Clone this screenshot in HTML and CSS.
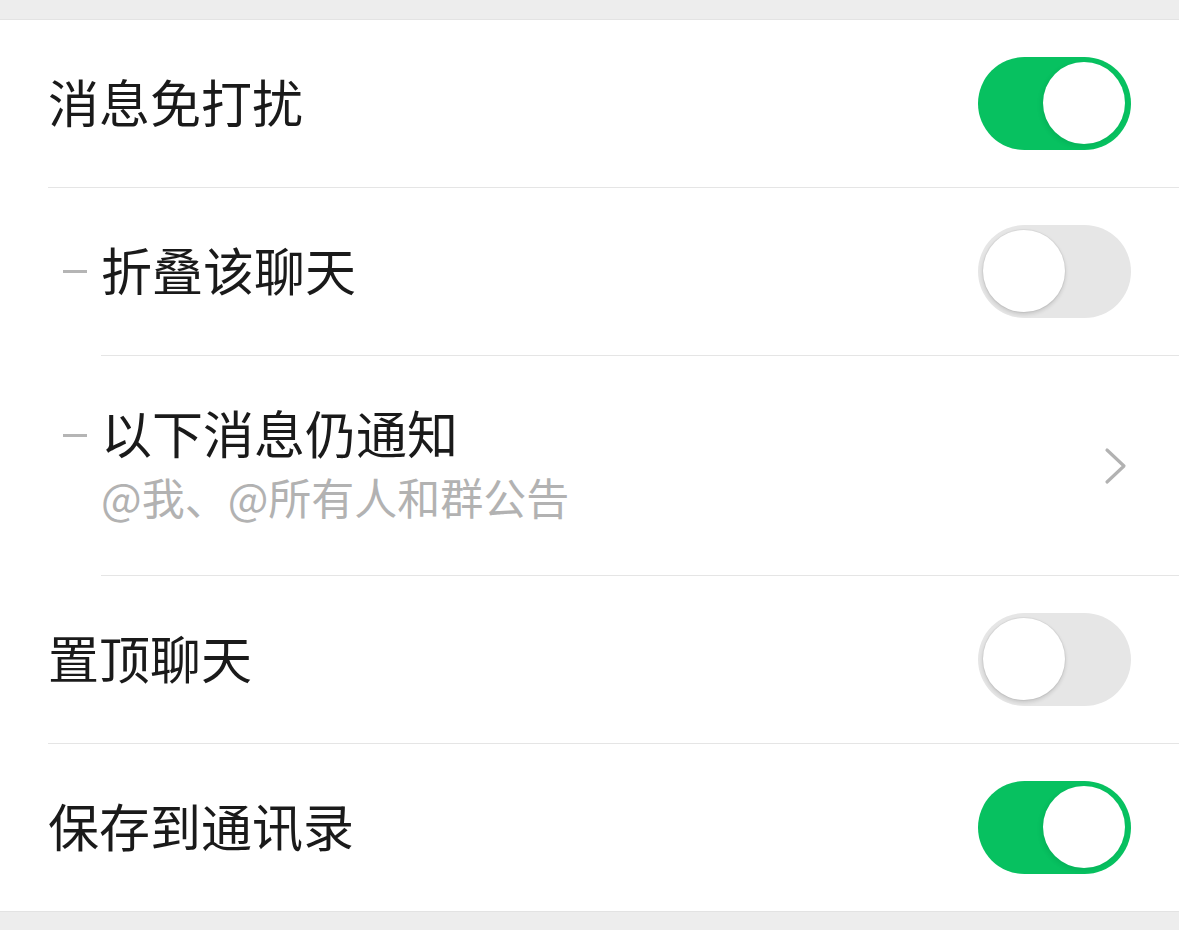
FILE: index.html
```html
<!DOCTYPE html>
<html lang="zh-CN">

<head>
    <meta charset="UTF-8">
    <meta name="viewport" content="width=device-width, initial-scale=1.0">
    <title>聊天信息</title>
    <link rel="stylesheet" href="styles.css">
</head>

<body>
    <div class="gap-top"></div>

    <div class="list">
        <div class="row">
            <div class="row-body">
                <span class="label">消息免打扰</span>
                <span class="switch on"><span class="knob"></span></span>
            </div>
        </div>

        <div class="row sub">
            <span class="dash"></span>
            <div class="row-body">
                <span class="label">折叠该聊天</span>
                <span class="switch"><span class="knob"></span></span>
            </div>
        </div>

        <div class="row sub tall">
            <span class="dash"></span>
            <div class="row-body">
                <div class="text">
                    <span class="label">以下消息仍通知</span>
                    <span class="desc">@我、@所有人和群公告</span>
                </div>
                <svg class="arrow" width="28" height="40" viewBox="0 0 28 40">
                    <polyline points="5,4 22,20 5,36" fill="none" stroke="#b2b2b2" stroke-width="3.2" stroke-linecap="round" stroke-linejoin="round" />
                </svg>
            </div>
        </div>

        <div class="row">
            <div class="row-body">
                <span class="label">置顶聊天</span>
                <span class="switch"><span class="knob"></span></span>
            </div>
        </div>

        <div class="row last">
            <div class="row-body">
                <span class="label">保存到通讯录</span>
                <span class="switch on"><span class="knob"></span></span>
            </div>
        </div>
    </div>

    <div class="gap-bottom"></div>
</body>

</html>
```

FILE: styles.css
```css
html,
body {
    margin: 0;
    padding: 0;
    background: #ededed;
    font-family: "Noto Sans CJK SC", "Noto Sans", sans-serif;
}

.gap-top {
    height: 19px;
}

.list {
    background: #fff;
    border-top: 1px solid #e3e3e3;
    border-bottom: 1px solid #e3e3e3;
}

.row {
    display: flex;
    align-items: stretch;
    padding-left: 48px;
}

.row.sub {
    padding-left: 63px;
}

.row-body {
    flex: 1;
    display: flex;
    align-items: center;
    justify-content: space-between;
    height: 167px;
    padding-right: 48px;
    border-bottom: 1px solid #e5e5e5;
}

.row.tall .row-body {
    height: 219px;
}

.row.last .row-body {
    border-bottom: none;
}

.dash {
    width: 24px;
    height: 3px;
    background: #b5b5b5;
    margin-right: 14px;
    align-self: center;
    margin-top: -1px;
}

.row.tall .dash {
    margin-top: -62px;
}

.label {
    font-size: 51px;
    color: #1a1a1a;
    line-height: 62px;
    padding-bottom: 5px;
}

.text {
    display: flex;
    flex-direction: column;
}

.text .label {
    padding-bottom: 0;
}

.desc {
    font-size: 43px;
    color: #b2b2b2;
    line-height: 52px;
    margin-top: 7px;
    padding-bottom: 8px;
}

.arrow {
    display: block;
    margin-right: 1px;
}

.switch {
    position: relative;
    width: 153px;
    height: 93px;
    border-radius: 47px;
    background: #e6e6e6;
    flex-shrink: 0;
}

.switch .knob {
    position: absolute;
    top: 5px;
    left: 5px;
    width: 82px;
    height: 82px;
    border-radius: 50%;
    background: #fff;
    box-shadow: 0 2px 4px rgba(0, 0, 0, 0.16), 0 0 0 1px rgba(0, 0, 0, 0.04);
}

.switch.on {
    background: #07c160;
}

.switch.on .knob {
    left: auto;
    right: 6px;
    box-shadow: -2px 2px 5px rgba(0, 0, 0, 0.08);
}

.gap-bottom {
    height: 20px;
}
```
